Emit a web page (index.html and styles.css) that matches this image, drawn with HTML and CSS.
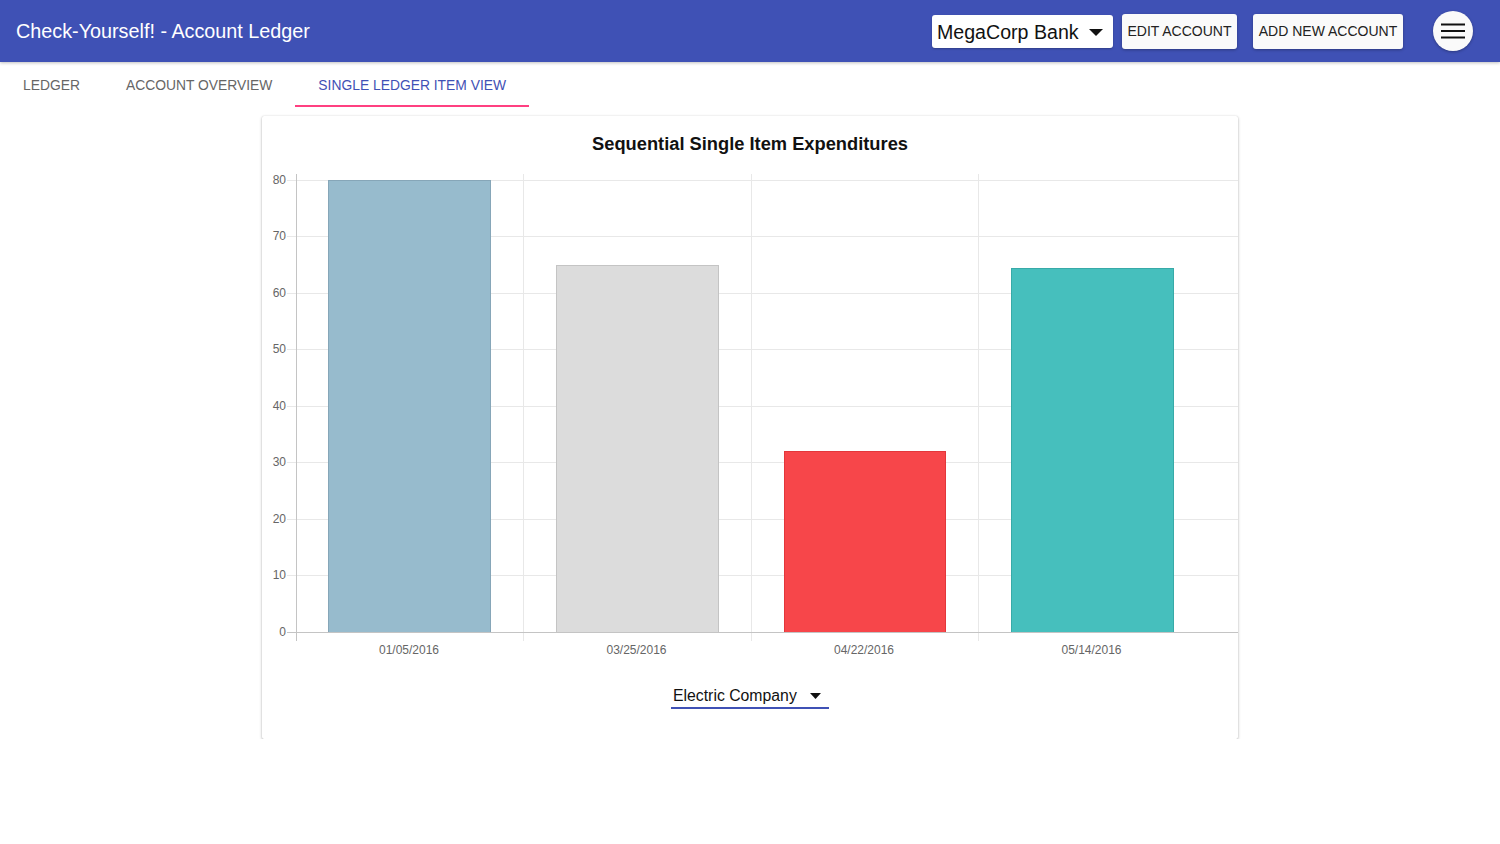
FILE: index.html
```html
<!DOCTYPE html>
<html>
<head>
<meta charset="utf-8">
<title>Check-Yourself! - Account Ledger</title>
<link rel="stylesheet" href="styles.css">
</head>
<body>
<header class="appbar">
  <h1 class="app-title">Check-Yourself! - Account Ledger</h1>
  <div class="appbar-actions">
    <div class="bank-select">
      <span class="bank-name">MegaCorp Bank</span>
      <svg class="caret" width="14" height="8" viewBox="0 0 14 8"><path d="M0 0 L14 0 L7 7 Z" fill="#111"/></svg>
    </div>
    <button class="btn btn-edit">EDIT ACCOUNT</button>
    <button class="btn btn-add">ADD NEW ACCOUNT</button>
    <button class="menu-btn" aria-label="menu">
      <svg width="26" height="16" viewBox="0 0 26 16"><path d="M1 1.5H25M1 8H25M1 14.5H25" stroke="#111" stroke-width="2" fill="none"/></svg>
    </button>
  </div>
</header>
<nav class="tabs">
  <div class="tab">LEDGER</div>
  <div class="tab">ACCOUNT OVERVIEW</div>
  <div class="tab tab-active">SINGLE LEDGER ITEM VIEW</div>
</nav>
<main class="content">
  <section class="card">
    <h2 class="chart-title">Sequential Single Item Expenditures</h2>
    <svg class="chart" width="976" height="494" viewBox="0 0 976 494">
      <g stroke="#e8e8e8" stroke-width="1">
        <line x1="25" y1="14.5" x2="976" y2="14.5"/>
        <line x1="25" y1="70.5" x2="976" y2="70.5"/>
        <line x1="25" y1="127.5" x2="976" y2="127.5"/>
        <line x1="25" y1="183.5" x2="976" y2="183.5"/>
        <line x1="25" y1="240.5" x2="976" y2="240.5"/>
        <line x1="25" y1="296.5" x2="976" y2="296.5"/>
        <line x1="25" y1="353.5" x2="976" y2="353.5"/>
        <line x1="25" y1="409.5" x2="976" y2="409.5"/>
        <line x1="261.5" y1="8" x2="261.5" y2="475"/>
        <line x1="489.5" y1="8" x2="489.5" y2="475"/>
        <line x1="716.5" y1="8" x2="716.5" y2="475"/>
      </g>
      <g stroke-width="1">
        <rect x="66.5" y="14.5" width="162" height="452" fill="#97bbcd" stroke="#86a6b8"/>
        <rect x="294.5" y="99.5" width="162" height="367" fill="#dcdcdc" stroke="#c4c4c4"/>
        <rect x="522.5" y="285.5" width="161" height="181" fill="#f7464a" stroke="#e3373b"/>
        <rect x="749.5" y="102.5" width="162" height="364" fill="#46bfbd" stroke="#38aaa8"/>
      </g>
      <g stroke="#c4c4c4" stroke-width="1">
        <line x1="34.5" y1="8" x2="34.5" y2="475"/>
        <line x1="25" y1="466.5" x2="976" y2="466.5"/>
      </g>
      <g class="axis-text" text-anchor="end">
        <text x="24" y="17.5">80</text>
        <text x="24" y="74">70</text>
        <text x="24" y="130.5">60</text>
        <text x="24" y="187">50</text>
        <text x="24" y="243.5">40</text>
        <text x="24" y="300">30</text>
        <text x="24" y="356.5">20</text>
        <text x="24" y="413">10</text>
        <text x="24" y="469.5">0</text>
      </g>
      <g class="axis-text" text-anchor="middle">
        <text x="147" y="487.5">01/05/2016</text>
        <text x="374.5" y="487.5">03/25/2016</text>
        <text x="602" y="487.5">04/22/2016</text>
        <text x="829.5" y="487.5">05/14/2016</text>
      </g>
    </svg>
    <div class="item-select-row">
      <div class="item-select">
        <span class="item-name">Electric Company</span>
        <svg class="caret-small" width="11" height="6" viewBox="0 0 11 6"><path d="M0 0 L11 0 L5.5 6 Z" fill="#111"/></svg>
      </div>
    </div>
  </section>
</main>
</body>
</html>
```

FILE: styles.css
```css
* { box-sizing: border-box; }

body {
  margin: 0;
  background: #ffffff;
  font-family: "Liberation Sans", Arial, sans-serif;
  color: #222;
}

.appbar {
  height: 62px;
  background: #3f51b5;
  display: flex;
  align-items: center;
  justify-content: space-between;
  padding: 0 27px 0 16px;
  box-shadow: 0 1px 3px rgba(0,0,0,0.25);
  position: relative;
  z-index: 1;
}

.app-title {
  margin: 0;
  font-size: 19.8px;
  font-weight: normal;
  color: #ffffff;
}

.appbar-actions {
  display: flex;
  align-items: center;
}

.bank-select {
  width: 181px;
  height: 33px;
  background: #ffffff;
  border-radius: 3px;
  display: flex;
  align-items: center;
  justify-content: space-between;
  padding: 2px 10px 0 5px;
  box-shadow: 0 1px 2px rgba(0,0,0,0.25);
  margin-top: 1px;
}

.bank-name {
  font-size: 19.6px;
  color: #111;
}

.btn {
  font-family: "Liberation Sans", Arial, sans-serif;
  font-size: 14px;
  color: #222;
  background: #fafafa;
  border: none;
  border-radius: 3px;
  height: 35px;
  padding: 0 4px;
  white-space: nowrap;
  box-shadow: 0 1px 3px rgba(0,0,0,0.3);
  cursor: pointer;
}

.btn-edit { margin-left: 9px; width: 115px; }
.btn-add { margin-left: 16px; width: 150px; }

.menu-btn {
  margin-left: 30px;
  width: 40px;
  height: 40px;
  border-radius: 50%;
  border: none;
  background: #fafafa;
  display: flex;
  align-items: center;
  justify-content: center;
  padding: 0;
  box-shadow: 0 1px 3px rgba(0,0,0,0.3);
}

.tabs {
  display: flex;
  height: 45px;
}

.tab {
  padding: 2px 23px 0;
  display: flex;
  align-items: center;
  font-size: 13.85px;
  color: #666;
  border-bottom: 2px solid transparent;
}

.tab-active {
  color: #3f51b5;
  border-bottom-color: #ff4081;
}

.content {
  display: flex;
  justify-content: center;
  padding-top: 9px;
}

.card {
  width: 976px;
  background: #ffffff;
  border-radius: 2px;
  box-shadow: 0 1px 3px rgba(0,0,0,0.3), 0 0 1px rgba(0,0,0,0.15);
  padding: 16px 0 30px;
  overflow: hidden;
}

.chart-title {
  margin: 0;
  text-align: center;
  font-size: 18.3px;
  line-height: 24px;
  font-weight: bold;
  color: #111;
}

.chart {
  display: block;
  margin-top: 10px;
}

.axis-text text {
  font-family: "Liberation Sans", Arial, sans-serif;
  font-size: 12px;
  fill: #666;
}

.item-select-row {
  display: flex;
  justify-content: center;
  margin-top: 20px;
}

.item-select {
  width: 158px;
  height: 29px;
  border-bottom: 2px solid #3f51b5;
  display: flex;
  align-items: center;
  justify-content: space-between;
  padding: 5px 8px 0 2px;
}

.item-name {
  font-size: 15.8px;
  color: #111;
}
```
